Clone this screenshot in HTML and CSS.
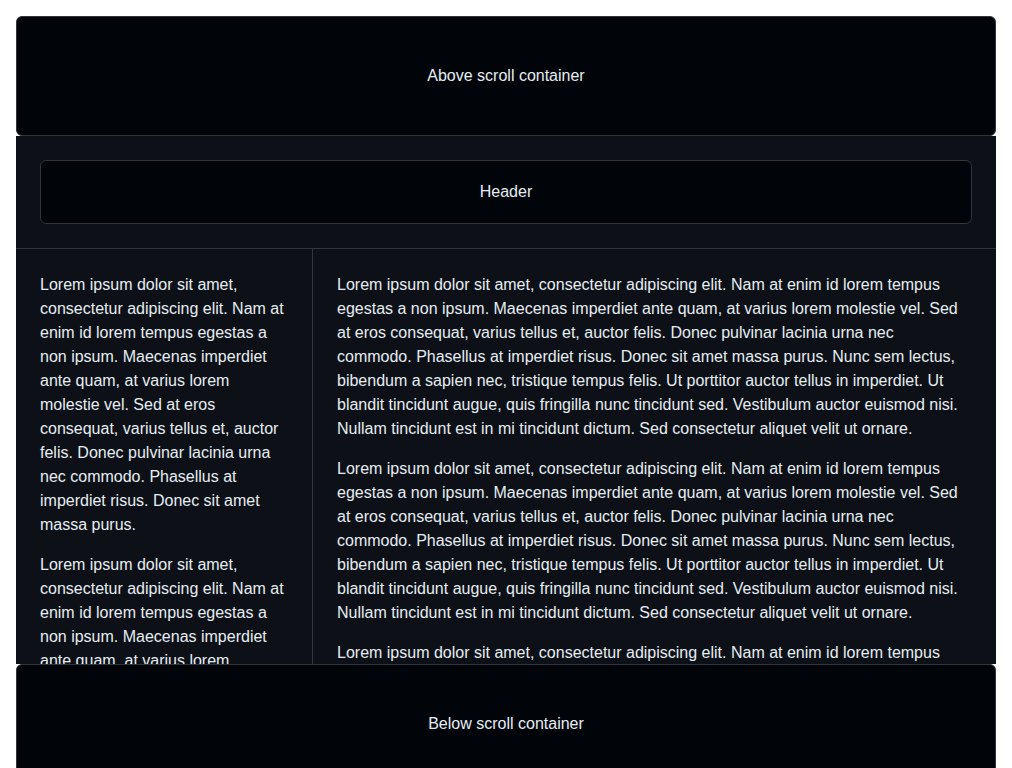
FILE: index.html
```html
<!DOCTYPE html>
<html lang="en">
<head>
<meta charset="utf-8">
<title>Scroll container</title>
<link rel="stylesheet" href="styles.css">
</head>
<body>
<div class="page">
  <div class="block block-above">Above scroll container</div>
  <div class="scroll">
    <div class="scroll-head">
      <div class="header-box">Header</div>
    </div>
    <div class="scroll-body">
      <aside class="sidebar">
        <p>Lorem ipsum dolor sit amet, consectetur adipiscing elit. Nam at enim id lorem tempus egestas a non ipsum. Maecenas imperdiet ante quam, at varius lorem molestie vel. Sed at eros consequat, varius tellus et, auctor felis. Donec pulvinar lacinia urna nec commodo. Phasellus at imperdiet risus. Donec sit amet massa purus.</p>
        <p>Lorem ipsum dolor sit amet, consectetur adipiscing elit. Nam at enim id lorem tempus egestas a non ipsum. Maecenas imperdiet ante quam, at varius lorem molestie vel. Sed at eros consequat, varius tellus et, auctor felis. Donec pulvinar lacinia urna nec commodo. Phasellus at imperdiet risus. Donec sit amet massa purus.</p>
      </aside>
      <main class="main">
        <p>Lorem ipsum dolor sit amet, consectetur adipiscing elit. Nam at enim id lorem tempus egestas a non ipsum. Maecenas imperdiet ante quam, at varius lorem molestie vel. Sed at eros consequat, varius tellus et, auctor felis. Donec pulvinar lacinia urna nec commodo. Phasellus at imperdiet risus. Donec sit amet massa purus. Nunc sem lectus, bibendum a sapien nec, tristique tempus felis. Ut porttitor auctor tellus in imperdiet. Ut blandit tincidunt augue, quis fringilla nunc tincidunt sed. Vestibulum auctor euismod nisi. Nullam tincidunt est in mi tincidunt dictum. Sed consectetur aliquet velit ut ornare.</p>
        <p>Lorem ipsum dolor sit amet, consectetur adipiscing elit. Nam at enim id lorem tempus egestas a non ipsum. Maecenas imperdiet ante quam, at varius lorem molestie vel. Sed at eros consequat, varius tellus et, auctor felis. Donec pulvinar lacinia urna nec commodo. Phasellus at imperdiet risus. Donec sit amet massa purus. Nunc sem lectus, bibendum a sapien nec, tristique tempus felis. Ut porttitor auctor tellus in imperdiet. Ut blandit tincidunt augue, quis fringilla nunc tincidunt sed. Vestibulum auctor euismod nisi. Nullam tincidunt est in mi tincidunt dictum. Sed consectetur aliquet velit ut ornare.</p>
        <p>Lorem ipsum dolor sit amet, consectetur adipiscing elit. Nam at enim id lorem tempus egestas a non ipsum. Maecenas imperdiet ante quam, at varius lorem molestie vel. Sed at eros consequat, varius tellus et, auctor felis. Donec pulvinar lacinia urna nec commodo. Phasellus at imperdiet risus. Donec sit amet massa purus. Nunc sem lectus, bibendum a sapien nec, tristique tempus felis. Ut porttitor auctor tellus in imperdiet. Ut blandit tincidunt augue, quis fringilla nunc tincidunt sed. Vestibulum auctor euismod nisi. Nullam tincidunt est in mi tincidunt dictum. Sed consectetur aliquet velit ut ornare.</p>
      </main>
    </div>
  </div>
  <div class="block block-below">Below scroll container</div>
</div>
</body>
</html>
```
FILE: styles.css
```css
html, body {
  margin: 0;
  padding: 0;
  background: #ffffff;
}

body {
  font-family: "Liberation Sans", Arial, sans-serif;
  font-size: 16px;
  line-height: 24px;
  color: #e6edf3;
}

.page {
  padding: 16px;
  display: flex;
  flex-direction: column;
}

.block {
  height: 120px;
  box-sizing: border-box;
  background: #010409;
  border: 1px solid #30363d;
  border-radius: 6px;
  display: flex;
  align-items: center;
  justify-content: center;
}

.scroll {
  height: 528px;
  background: #0d1117;
  display: flex;
  flex-direction: column;
  overflow: hidden;
}

.scroll-head {
  padding: 24px;
  border-bottom: 1px solid #30363d;
  flex: none;
}

.header-box {
  height: 64px;
  box-sizing: border-box;
  background: #010409;
  border: 1px solid #30363d;
  border-radius: 6px;
  display: flex;
  align-items: center;
  justify-content: center;
}

.scroll-body {
  flex: 1;
  min-height: 0;
  display: flex;
}

.sidebar {
  width: 248px;
  flex: none;
  padding: 24px;
  border-right: 1px solid #30363d;
  overflow: hidden;
}

.main {
  flex: 1;
  min-width: 0;
  padding: 24px 34px 24px 24px;
  overflow: hidden;
}

.sidebar p,
.main p {
  margin: 0 0 16px;
}
```
